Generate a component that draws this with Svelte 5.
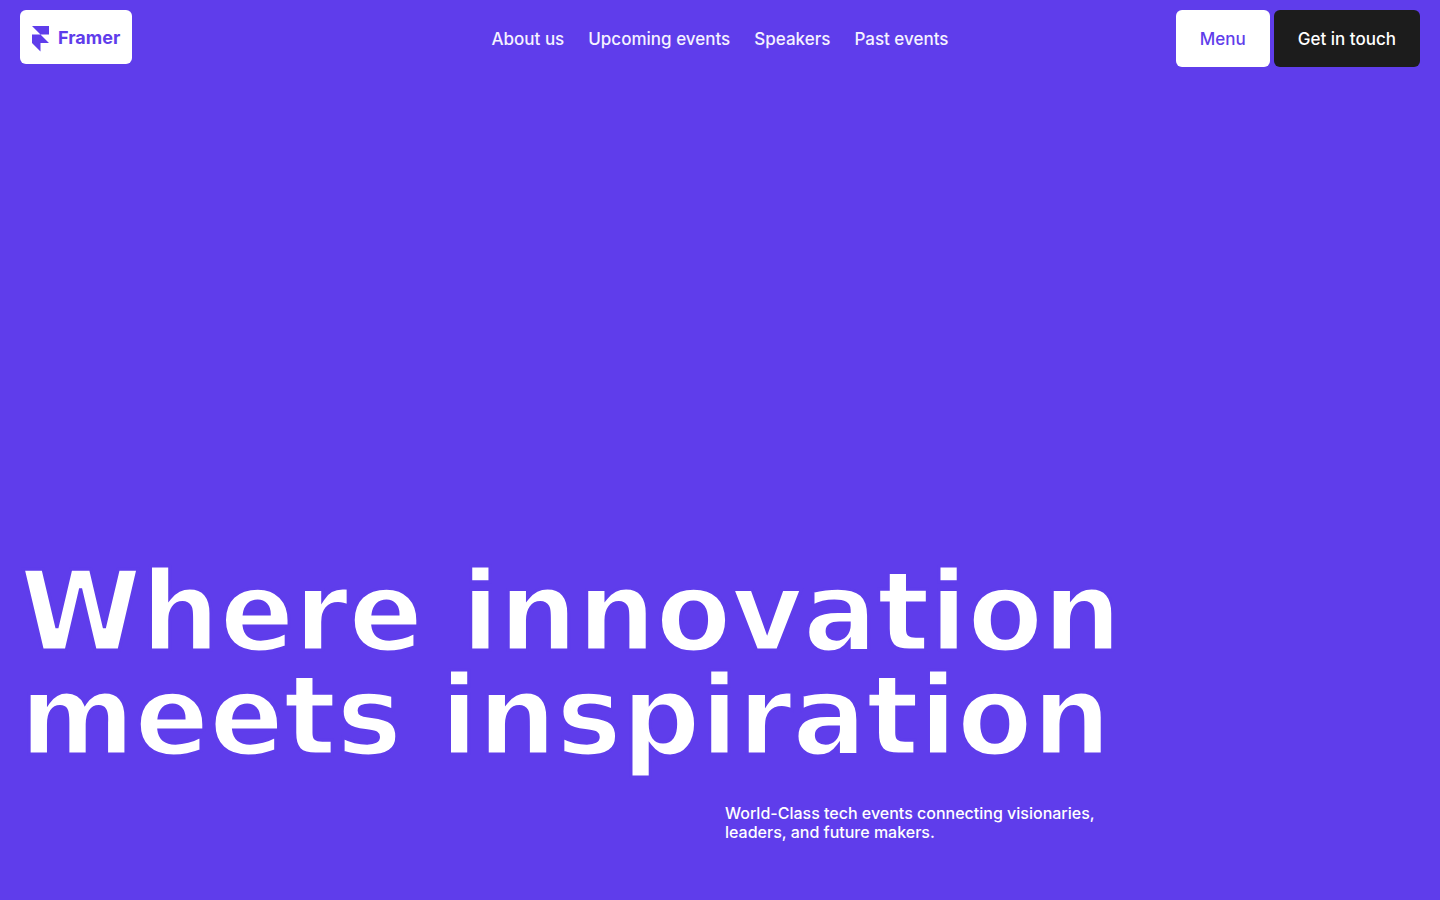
<script lang="ts">
  const links = [
    { label: 'About us', href: '#about' },
    { label: 'Upcoming events', href: '#upcoming' },
    { label: 'Speakers', href: '#speakers' },
    { label: 'Past events', href: '#past' }
  ];

  const titleLines = ['Where innovation', 'meets inspiration'];
</script>

<div class="page">
  <header class="header">
    <a class="logo" href="#home">
      <svg class="logo-mark" viewBox="0 -4 18 30" width="18" height="30" aria-hidden="true">
        <path d="M0 0h17v8.5H8.5zM0 8.5h8.5L17 17H8.5v8.5L0 17z" />
      </svg>
      <span class="logo-name">Framer</span>
    </a>

    <nav class="nav">
      {#each links as link}
        <a class="nav-link" href={link.href}>{link.label}</a>
      {/each}
    </nav>

    <div class="actions">
      <button class="button button-light" type="button">Menu</button>
      <button class="button button-dark" type="button">Get in touch</button>
    </div>
  </header>

  <main class="hero">
    <h1 class="title">
      {#each titleLines as line}
        <span class="title-line">{line}</span>
      {/each}
    </h1>
    <div class="intro">
      <p class="intro-text">World-Class tech events connecting visionaries, leaders, and future makers.</p>
    </div>
  </main>
</div>

<style>
:global(body) {
  margin: 0;
  background: #5f3deb;
}

.page {
  box-sizing: border-box;
  min-height: 100vh;
  display: flex;
  flex-direction: column;
  background: #5f3deb;
  color: #fff;
  font-family: Inter, 'Liberation Sans', sans-serif;
  font-size: 16px;
  line-height: 19px;
}

/* Top bar: logo, centered links, buttons */
.header {
  display: grid;
  grid-template-columns: 1fr auto 1fr;
  align-items: start;
  padding: 10px 20px;
}

.logo {
  box-sizing: border-box;
  justify-self: start;
  display: flex;
  align-items: center;
  gap: 8px;
  height: 54px;
  padding: 0 12px;
  border-radius: 6px;
  background: #fff;
  color: #5f3deb;
  text-decoration: none;
}

.logo-mark {
  fill: currentColor;
}

.logo-name {
  font-size: 18px;
  font-weight: 700;
}

.nav {
  display: flex;
  gap: 24px;
  padding: 20px 0 18px;
}

.nav-link {
  color: #f5f2ff;
  font-size: 17px;
  font-weight: 500;
  text-decoration: none;
}

.actions {
  justify-self: end;
  display: flex;
  gap: 4px;
}

.button {
  padding: 20px 24px 18px;
  border: none;
  border-radius: 6px;
  font: inherit;
  font-size: 17px;
  font-weight: 500;
  cursor: pointer;
}

.button-light {
  background: #fff;
  color: #5f3deb;
}

.button-dark {
  background: #1c1c1c;
  color: #fff;
}

/* Headline sits at the bottom of the screen */
.hero {
  flex: 1;
  display: flex;
  flex-direction: column;
  justify-content: flex-end;
  gap: 36px;
  padding: 0 20px 58px;
}

/* Background-coloured outline thins the heavy bold strokes */
.title {
  margin: 0;
  font-family: 'DejaVu Sans', sans-serif;
  font-size: 110px;
  font-weight: 700;
  line-height: 104px;
  -webkit-text-stroke: 3px #5f3deb;
}

.title-line {
  display: block;
}

.intro {
  display: grid;
  grid-template-columns: 1fr 1fr;
  column-gap: 10px;
}

.intro-text {
  grid-column: 2;
  max-width: 400px;
  margin: 0;
  font-weight: 500;
}
</style>
